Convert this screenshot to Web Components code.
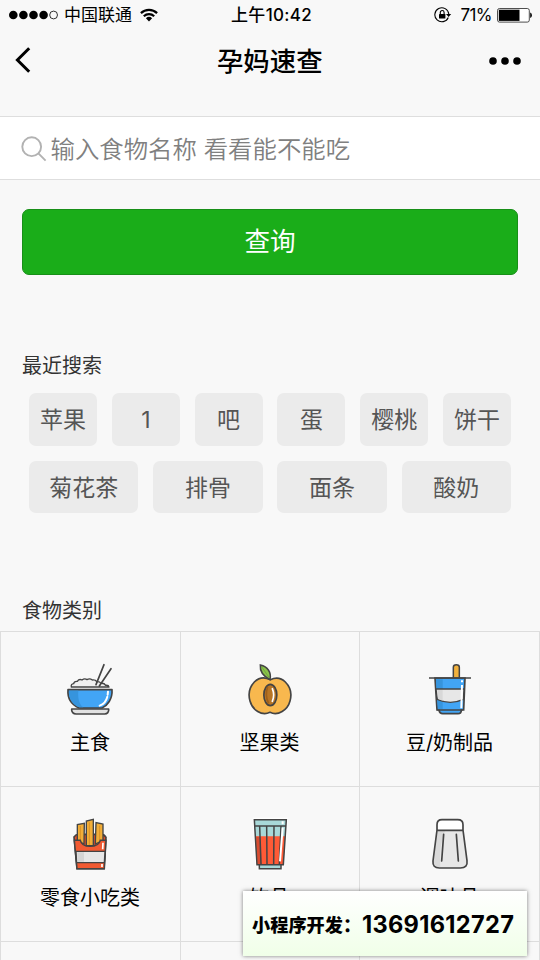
<!DOCTYPE html>
<html lang="zh-CN">
<head>
<meta charset="utf-8">
<title>孕妈速查</title>
<style>
html,body{margin:0;width:540px;height:960px;overflow:hidden;background:#f8f8f8}
body{font-family:Inter,"Noto Sans CJK SC",sans-serif;color:#000}
</style>
</head>
<body>
<food-app></food-app>
<script>
const define = (name, html, setup) => {
  const t = document.createElement('template');
  t.innerHTML = html;
  customElements.define(name, class extends HTMLElement {
    connectedCallback() {
      if (this.shadowRoot) return;
      this.attachShadow({mode: 'open'}).append(t.content.cloneNode(true));
      if (setup) setup(this, this.shadowRoot);
    }
  });
};

define('status-bar', `
<style>
:host{display:grid;grid-template-columns:1fr auto 1fr;align-items:center;height:30px;padding:0 8px 0 9px;font-size:17px;line-height:30px;box-sizing:border-box}
div{display:flex;align-items:center}
.r{justify-content:flex-end}
svg{display:block;flex:none}
.time{font-weight:500;letter-spacing:.3px;padding-left:2px}
.carrier{margin:0 8px 0 6px}
.pct{margin:0 5px 0 8px;letter-spacing:-.55px}
</style>
<div><svg width="49" height="10" viewBox="0 0 49 10"><g><circle cx="4.3" cy="5" r="4.3"/><circle cx="14.4" cy="5" r="4.3"/><circle cx="24.5" cy="5" r="4.3"/><circle cx="34.6" cy="5" r="4.3"/><circle cx="44.6" cy="5" r="3.9" fill="none" stroke="#000" stroke-width=".8"/></g></svg>
<span class="carrier">中国联通</span>
<svg width="18" height="14" viewBox="0 0 18 14"><g fill="none" stroke="#000" stroke-width="2.2"><path d="M.9 5.1a11.6 11.6 0 0 1 16.2 0"/><path d="M3.8 8.2a7.5 7.5 0 0 1 10.4 0"/></g><path d="M5.9 10.3a4.5 4.5 0 0 1 6.2 0L9 13.4z"/></svg></div>
<div class="time">上午10:42</div>
<div class="r"><svg width="18" height="16" viewBox="0 0 18 16"><path d="M14.3 10.5A7 7 0 1 1 14.8 7" fill="none" stroke="#000" stroke-width="1.1"/><path d="M12 7h5.2l-2.6 3z"/><rect x="5" y="7" width="6.4" height="4.6" rx=".6"/><path d="M6.3 7V5.4a1.9 1.9 0 0 1 3.8 0V7" fill="none" stroke="#000" stroke-width="1.1"/></svg>
<span class="pct">71%</span>
<svg width="35" height="15" viewBox="0 0 35 15"><rect x=".5" y=".5" width="31.8" height="13.6" rx="2" fill="#fff" stroke="#222" stroke-width=".8"/><path d="M1.8 1.7h20.7v11.2H1.8z"/><path d="M33.2 4.6c2.2.6 2.2 4.8 0 5.4z"/></svg></div>`);

define('nav-bar', `
<style>
:host{display:grid;grid-template-columns:1fr auto 1fr;align-items:center;height:60px;padding:0 19.5px 0 15px;font-size:26.4px;font-weight:500;box-sizing:border-box}
svg{display:block}
.more{justify-self:end}
h1{font:inherit;margin:0;line-height:62px;height:60px}
.t{padding-left:4px}
</style>
<svg width="17" height="26" viewBox="0 0 17 26"><path d="M14.2 1.2 2.4 13l11.8 11.8" fill="none" stroke="#000" stroke-width="3"/></svg>
<h1 class="t"><slot></slot></h1>
<svg class="more" width="32" height="9" viewBox="0 0 32 9"><circle cx="4" cy="5" r="3.8"/><circle cx="16" cy="5" r="3.8"/><circle cx="28" cy="5" r="3.8"/></svg>`);

define('search-field', `
<style>
:host{display:flex;align-items:center;height:64px;margin-top:26px;padding-left:21px;background:#fff;border-top:1px solid #dedede;border-bottom:1px solid #dedede;box-sizing:border-box;color:#808080;font-size:24.4px;line-height:26px;font-weight:350;gap:3.5px}
svg{flex:none;margin-top:2px}
span{white-space:pre;padding-top:1px}
</style>
<svg width="26" height="26" viewBox="0 0 26 26" fill="none" stroke="#b2b2b2" stroke-width="1.9"><circle cx="10.7" cy="10.7" r="9.4"/><path d="m17.4 17.4 7.2 7.2"/></svg>
<span><slot></slot></span>`);

define('primary-button', `
<style>
:host{display:block;margin:28.5px 22px 0}
button{display:block;width:100%;height:66.5px;padding:0;border:1px solid #188f18;border-radius:7px;background:#1aad19;color:#fff;font:inherit;font-size:25.6px;line-height:64px}
</style>
<button><slot></slot></button>`);

define('section-title', `
<style>:host{display:block;padding-left:22px;height:30px;line-height:32px;font-size:20px;color:#333}</style><slot></slot>`);

define('tag-list', `
<style>:host{display:flex;flex-direction:column;gap:15px;padding:0 29px}</style><slot></slot>`);
define('tag-row', `
<style>:host{display:flex;gap:14.7px;height:52.6px}</style><slot></slot>`);
define('food-tag', `
<style>:host{flex:1 1 0;display:flex;align-items:center;justify-content:center;border-radius:7px;background:#ebebeb;color:#555;font-size:23px;line-height:24px;padding-top:2px;box-sizing:border-box;white-space:nowrap}</style><slot></slot>`);

define('food-grid', `
<style>:host{display:grid;grid-template-columns:181px 179px 180px;grid-auto-rows:155px;border-top:1px solid #ddd;box-sizing:border-box}
::slotted(:nth-child(3n+1)){border-left:1px solid #ddd}
::slotted(:nth-child(3n)){padding-right:0!important}</style><slot></slot>`);

const icons = {
  rice: `<g stroke="#444" stroke-width="5" stroke-linejoin="round" stroke-linecap="round"><path d="M64 111q-2-9 7-10 1-8 11-7 5-8 14-4 8-6 15-1 8-5 16 1 10-1 13 5 9-1 13 5 10-1 14 6 9-1 10 5z" fill="#efefef" stroke-width="4"/><path d="M138 104l24-60M148 108l35-52" fill="none"/><path d="M54 119h132c2 28-14 48-30 55H87c-21-9-35-28-33-55z" fill="#42a5f5"/><path d="M65 177h111c1 9-4 15-12 15H78c-8 0-14-6-13-15z" fill="#e2e2e2"/></g><path d="M57 122h28c-2 24 3 42 15 50H88c-21-9-32-26-31-50z" fill="#3694dd"/><path d="M174 125l-1 9M172 140c-3 12-11 23-23 27" fill="none" stroke="#fff" stroke-width="6" stroke-linecap="round"/>`,
  apricot: `<path d="M121 89c17-8 34-4 45 7 15 15 20 36 14 57-7 27-36 46-60 34-25 12-53-7-60-34-6-21-1-42 13-57 12-12 30-16 48-7z" fill="#f8b84e" stroke="#444" stroke-width="5"/><path d="M120 89c-21-11-31-25-29-44 22 5 34 22 29 44z" fill="#8bc34a" stroke="#444" stroke-width="4.5"/><path d="M94 49l23 33" stroke="#649b37" stroke-width="2"/><ellipse cx="121" cy="135" rx="19.5" ry="32" fill="#b87524" stroke="#444" stroke-width="5"/><path d="M113 110c-6 17-5 35 3 50" stroke="#9e5f19" stroke-width="5" fill="none"/><path d="M127 116q8 19 0 38" fill="none" stroke="#fff" stroke-width="5" stroke-linecap="round"/>`,
  yogurt: `<path d="M130 83V52c0-10 18-10 18 0v31" fill="#f2b13c" stroke="#444" stroke-width="4.5"/><path d="M75 84h90l-4 96h-7c0 7-4 11-10 11H98c-7 0-10-5-11-11h-6z" fill="#42a5f5" stroke="#444" stroke-width="5"/><path d="M78 88h20v90H84z" fill="#3694dd"/><path d="M78 117h84l-2 31q-39 18-78 0z" fill="#e7e7e7" stroke="#444" stroke-width="4"/><path d="M82 120h16v32l-14-5z" fill="#d8d8d8"/><path d="M57 84h126M82 180h76" stroke="#444" stroke-width="5"/><path d="M156 91v6M156 105l-2 70" stroke="#fff" stroke-width="6"/>`,
  fries: `<path d="M72 96q7-10 17-8h65q9 0 14 9l-6 94H81z" fill="#e84e28" stroke="#444" stroke-width="5"/><g fill="#f2ae38" stroke="#444" stroke-width="4"><path d="M82 106V59l21-4-1 62zM159 106V57l-21-4-2 64z"/><path d="M109 122V48l21-5v79z"/></g><path d="M91 63v49M118 52v68M149 62v46" stroke="#d48c22" stroke-width="2.5"/><path d="M73 106h18c3 13 10 18 29 18s28-5 31-18h17l-5 85H81z" fill="#f15a32" stroke="#444" stroke-width="4.5"/><path d="M78 139h87l-2 34H80z" fill="#e7e7e7" stroke="#444" stroke-width="4"/><path d="M82 142h20v28H83z" fill="#d5d5d5"/><path d="M159 113l-1 20M156 177v9" stroke="#fff" stroke-width="5"/>`,
  drink: `<path d="M68 38h106l-10 144h-6v14H83v-14h-7z" fill="#fff"/><path d="M73 44h96l-10 135h-6v12H88v-12h-8z" fill="#a8d8d8"/><path d="M76 94h90l-6 85H81z" fill="#ff5a36"/><path d="M79 95h12l4 82H83z" fill="#d94b30"/><path d="M73 44h96l-9 135h-7v12H88v-12h-7zM75 63h91M80 179h81M89 64l4 114M110 64l1 114M132 64l-1 114M153 64l-5 114" fill="none" stroke="#444" stroke-width="4.5"/><path d="M158 49v9M158 68l-8 101" stroke="#fff" stroke-width="6"/>`,
  spice: `<path d="M82 75V58q0-13 13-13h49q14 0 14 13v17l12 92q3 22-20 22H88q-21 0-19-21z" fill="#e7e7e7"/><path d="M84 74V59q0-12 12-12h48q12 0 12 12v15z" fill="#fff"/><path d="M83 78h22c-13 33-17 67-14 109-15 0-21-6-19-19z" fill="#d9d9d9"/><path d="M81 75V59q0-15 15-15h47q16 0 16 15v16l12 92q3 22-20 22H88q-21 0-19-21zM81 76h78" fill="none" stroke="#444" stroke-width="5"/><path d="M101 88l-6 80M139 88l6 80" stroke="#444" stroke-width="5" stroke-linecap="round"/>`
};
define('food-cell', `
<style>:host{display:flex;flex-direction:column;align-items:center;padding:18px 1px 0 0;border-right:1px solid #ddd;border-bottom:1px solid #ddd;box-sizing:border-box;font-size:20px;line-height:30px;color:#000}
svg{display:block;width:80px;height:75px;flex:none}span{margin-top:3px}</style>
<svg viewBox="0 0 240 225" fill="none"></svg><span><slot></slot></span>`, (el, root) => {
  root.querySelector('svg').innerHTML = icons[el.getAttribute('icon')] || '';
});

define('contact-banner', `
<style>:host{position:absolute;left:243px;top:891px;width:284px;height:65px;display:flex;align-items:center;padding:3px 0 0 9px;box-sizing:border-box;background:linear-gradient(#fff,#f0ffe8);box-shadow:0 0 4px rgba(0,0,0,.5);font-weight:900;font-size:18.2px;white-space:nowrap}
b{font:700 23.6px/30px Inter,sans-serif;letter-spacing:.3px}
.l{width:110px;line-height:32px}</style>
<span class="l"><slot></slot></span><b><slot name="phone"></slot></b>`);

define('food-app', `
<style>
:host{display:block;position:relative;width:540px;height:960px;overflow:hidden;background:#f8f8f8}
.recent{margin-top:75px}
tag-list{margin-top:13px}
.cat{margin-top:82px}
food-grid{margin-top:6px}
</style>
<status-bar></status-bar>
<nav-bar>孕妈速查</nav-bar>
<search-field>输入食物名称 看看能不能吃</search-field>
<primary-button>查询</primary-button>
<section-title class="recent">最近搜索</section-title>
<tag-list>
<tag-row><food-tag>苹果</food-tag><food-tag>1</food-tag><food-tag>吧</food-tag><food-tag>蛋</food-tag><food-tag>樱桃</food-tag><food-tag>饼干</food-tag></tag-row>
<tag-row><food-tag>菊花茶</food-tag><food-tag>排骨</food-tag><food-tag>面条</food-tag><food-tag>酸奶</food-tag></tag-row>
</tag-list>
<section-title class="cat">食物类别</section-title>
<food-grid>
<food-cell icon="rice">主食</food-cell><food-cell icon="apricot">坚果类</food-cell><food-cell icon="yogurt">豆/奶制品</food-cell>
<food-cell icon="fries">零食小吃类</food-cell><food-cell icon="drink">饮品</food-cell><food-cell icon="spice">调味品</food-cell>
<food-cell></food-cell><food-cell></food-cell><food-cell></food-cell>
</food-grid>
<contact-banner>小程序开发：<span slot="phone">13691612727</span></contact-banner>`);
</script>
</body>
</html>
